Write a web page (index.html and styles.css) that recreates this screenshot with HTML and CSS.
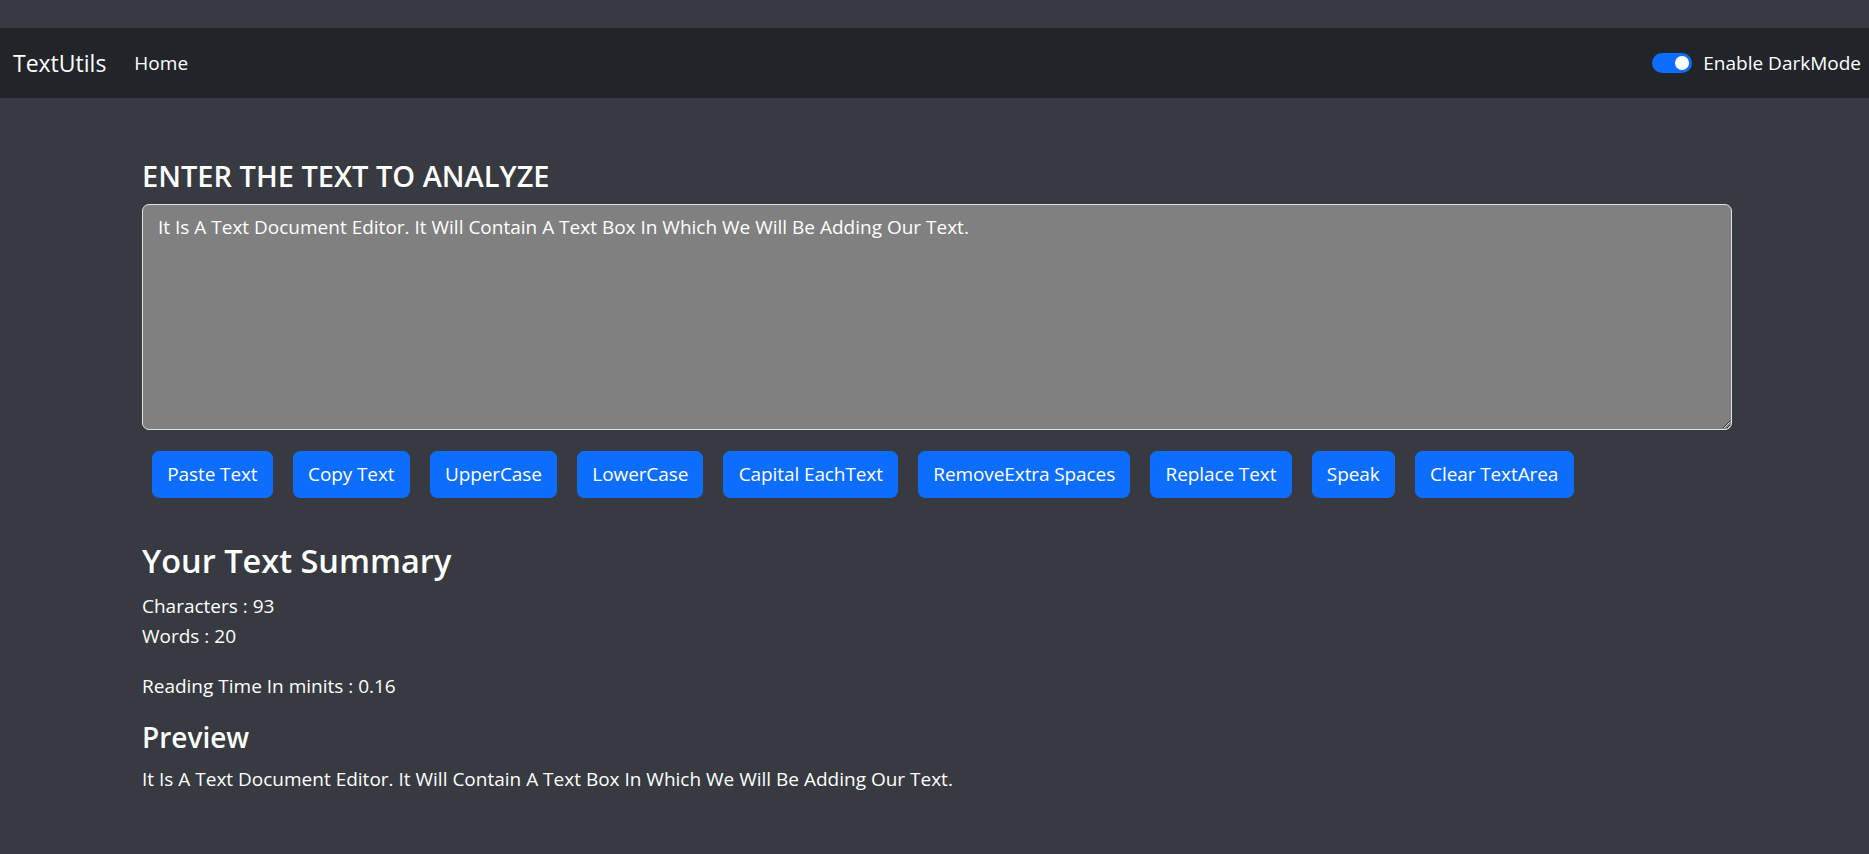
FILE: index.html
```html
<!DOCTYPE html>
<html lang="en">
<head>
<meta charset="utf-8">
<title>TextUtils</title>
<link rel="stylesheet" href="styles.css">
</head>
<body>
<div class="topstrip"></div>
<nav class="navbar">
  <a class="brand" href="#">TextUtils</a>
  <a class="nav-link" href="#">Home</a>
  <div class="switch-wrap">
    <span class="switch"><span class="knob"></span></span>
    <span class="switch-label">Enable DarkMode</span>
  </div>
</nav>
<main class="container">
  <h1 class="title">ENTER THE TEXT TO ANALYZE</h1>
  <textarea class="textbox" rows="7">It Is A Text Document Editor. It Will Contain A Text Box In Which We Will Be Adding Our Text.</textarea>
  <div class="btn-row">
    <button class="btn">Paste Text</button>
    <button class="btn">Copy Text</button>
    <button class="btn">UpperCase</button>
    <button class="btn">LowerCase</button>
    <button class="btn">Capital EachText</button>
    <button class="btn">RemoveExtra Spaces</button>
    <button class="btn">Replace Text</button>
    <button class="btn">Speak</button>
    <button class="btn">Clear TextArea</button>
  </div>
  <h2 class="summary">Your Text Summary</h2>
  <p class="para">Characters : 93<br>Words : 20</p>
  <p class="para">Reading Time In minits : 0.16</p>
  <h3 class="preview">Preview</h3>
  <p class="para">It Is A Text Document Editor. It Will Contain A Text Box In Which We Will Be Adding Our Text.</p>
</main>
</body>
</html>
```
FILE: styles.css
```css
* { box-sizing: border-box; }
html, body { margin: 0; padding: 0; }
body {
  background: #373a40;
  color: #fff;
  font-family: "Open Sans", "Noto Sans", sans-serif;
  font-size: 19px;
  line-height: 30px;
  height: 854px;
}
.topstrip { height: 28px; }
.navbar {
  height: 70px;
  background: #212529;
  display: flex;
  align-items: center;
  padding: 0 8px 0 13px;
}
.brand {
  color: #fff;
  text-decoration: none;
  font-size: 23px;
  margin-right: 28px;
}
.nav-link {
  color: #fff;
  text-decoration: none;
  font-size: 19px;
}
.switch-wrap {
  margin-left: auto;
  display: flex;
  align-items: center;
}
.switch {
  width: 40px;
  height: 20px;
  border-radius: 10px;
  background: #0d6efd;
  display: flex;
  align-items: center;
  justify-content: flex-end;
  padding-right: 3px;
  margin-right: 11px;
}
.knob {
  width: 14px;
  height: 14px;
  border-radius: 50%;
  background: #fff;
}
.switch-label { font-size: 19px; }
.container {
  padding: 61px 137px 0 142px;
}
.title {
  font-size: 29px;
  font-weight: 600;
  line-height: 1.2;
  margin: 0 0 10px;
}
.textbox {
  display: block;
  width: 100%;
  height: 226px;
  background: #808080;
  color: #fff;
  border: 1px solid #dee2e6;
  border-radius: 7px;
  padding: 7px 15px;
  font: inherit;
  font-size: 19px;
  line-height: 30px;
}
.btn-row {
  margin-top: 21px;
  display: flex;
  flex-wrap: wrap;
}
.btn {
  margin: 0 10px;
  background: #0d6efd;
  color: #fff;
  border: 1px solid #0d6efd;
  border-radius: 7px;
  padding: 7.5px 14.25px;
  font: inherit;
  font-size: 19px;
  line-height: 30px;
  letter-spacing: -0.1px;
}
.summary {
  font-size: 32.5px;
  font-weight: 600;
  line-height: 1.2;
  margin: 43px 0 11px;
}
.para { margin: 0 0 20px; }
.preview {
  font-size: 28px;
  font-weight: 600;
  line-height: 1.2;
  margin: 0 0 10px;
}
```
